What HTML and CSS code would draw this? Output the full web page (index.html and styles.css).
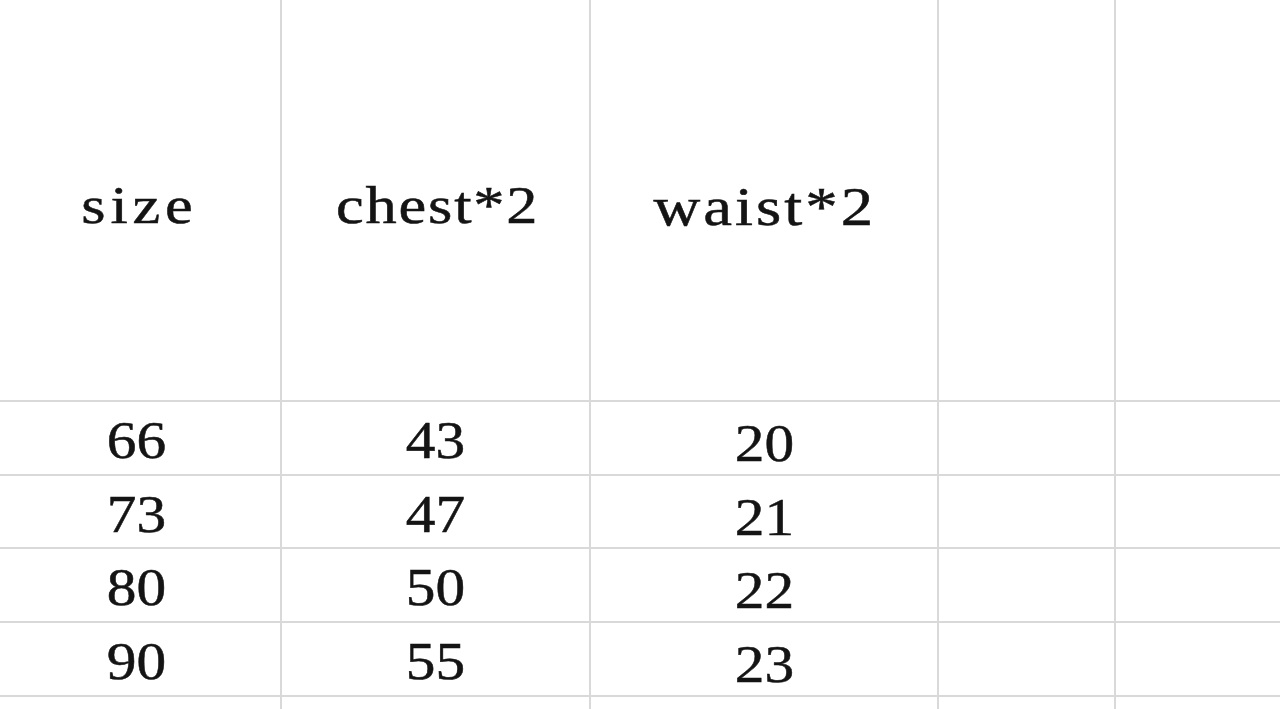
FILE: index.html
```html
<!DOCTYPE html>
<html>
<head>
<meta charset="utf-8">
<link rel="stylesheet" href="styles.css">
</head>
<body>
<div class="sheet">
  <div class="cell head h-size"><span class="txt">size</span></div>
  <div class="cell head h-chest"><span class="txt">chest*2</span></div>
  <div class="cell head h-waist"><span class="txt">waist*2</span></div>
  <div class="cell head"></div>
  <div class="cell head last"></div>

  <div class="cell num first"><span class="txt">66</span></div>
  <div class="cell num"><span class="txt">43</span></div>
  <div class="cell num low"><span class="txt">20</span></div>
  <div class="cell"></div>
  <div class="cell last"></div>

  <div class="cell num first"><span class="txt">73</span></div>
  <div class="cell num"><span class="txt">47</span></div>
  <div class="cell num low"><span class="txt">21</span></div>
  <div class="cell"></div>
  <div class="cell last"></div>

  <div class="cell num first"><span class="txt">80</span></div>
  <div class="cell num"><span class="txt">50</span></div>
  <div class="cell num low"><span class="txt">22</span></div>
  <div class="cell"></div>
  <div class="cell last"></div>

  <div class="cell num first"><span class="txt">90</span></div>
  <div class="cell num"><span class="txt">55</span></div>
  <div class="cell num low"><span class="txt">23</span></div>
  <div class="cell"></div>
  <div class="cell last"></div>

  <div class="cell"></div>
  <div class="cell"></div>
  <div class="cell"></div>
  <div class="cell"></div>
  <div class="cell last"></div>
</div>
</body>
</html>
```
FILE: styles.css
```css
html, body {
  margin: 0;
  padding: 0;
  background: #ffffff;
  overflow: hidden;
}

.sheet {
  display: grid;
  grid-template-columns: 282px 309px 348px 177px 1fr;
  grid-template-rows: 402px 74px 73px 74px 74px 74px;
  width: 1280px;
  height: 709px;
  overflow: hidden;
}

.cell {
  box-sizing: border-box;
  border-right: 2px solid #d9d9d9;
  border-bottom: 2px solid #d9d9d9;
  display: flex;
  align-items: center;
  justify-content: center;
  color: #141414;
}

.cell.last {
  border-right: none;
}

.txt {
  display: inline-block;
  white-space: nowrap;
  -webkit-text-stroke: 0.5px currentColor;
}

.head {
  font-family: "Liberation Serif", "Times New Roman", serif;
  font-size: 52px;
  padding-top: 10px;
}

.head .txt {
  transform: scaleX(1.2);
}

.h-size {
  letter-spacing: 4px;
  padding-left: 4px;
  padding-right: 6px;
}

.h-chest {
  letter-spacing: 1.5px;
  padding-left: 4px;
}

.h-waist {
  font-size: 54px;
  letter-spacing: 2.5px;
  padding-left: 2px;
  padding-top: 14px;
}

.num {
  font-family: "Liberation Serif", "Times New Roman", serif;
  font-size: 53px;
  padding-top: 4px;
}

.num .txt {
  transform: scaleX(1.12);
}

.num.first {
  padding-right: 8px;
}

.num.low {
  padding-top: 10px;
}
```
